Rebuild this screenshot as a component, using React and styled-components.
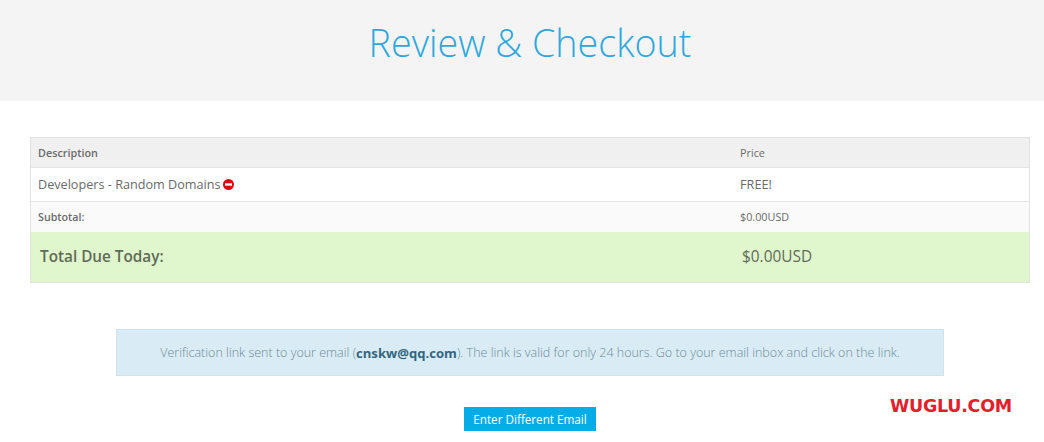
import React from "react";
import styled, { createGlobalStyle } from "styled-components";

const Global = createGlobalStyle`
  html, body { margin: 0; padding: 0; background: #fff; }
  body { font-family: "Open Sans", "Liberation Sans", sans-serif; color: #666; }
`;

const Page = styled.div`
  position: relative;
  width: 1044px;
  height: 442px;
  overflow: hidden;
  background: #fff;
`;

const Hero = styled.header`
  height: 101px;
  padding-left: 16px;
  box-sizing: border-box;
  background: #f4f4f4;
  display: flex;
  justify-content: center;
`;

const Title = styled.h1`
  margin: 18px 0 0;
  font-size: 37.7px;
  line-height: 50px;
  font-weight: 300;
  color: #2ea8dc;
`;

const Table = styled.div`
  margin: 36px 14px 0 30px;
  border: 1px solid #e2e2e2;
  display: flex;
  flex-direction: column;
`;

const Row = styled.div`
  display: grid;
  grid-template-columns: 702px 1fr;
  align-items: center;
  height: ${(p) => p.$h}px;
  padding-bottom: ${(p) => p.$lift || 0}px;
  background: ${(p) => p.$bg};
  border-bottom: ${(p) => (p.$line ? "1px solid #e4e4e4" : "none")};
  box-sizing: border-box;
`;

const Cell = styled.div`
  padding-left: ${(p) => p.$pad || 7}px;
  font-size: ${(p) => p.$size}px;
  font-weight: ${(p) => p.$weight || 400};
  color: ${(p) => p.$color || "#6a6a6a"};
  display: flex;
  align-items: center;
  gap: 2px;
`;

const Notice = styled.div`
  margin: 46px 100px 0 116px;
  height: 47px;
  box-sizing: border-box;
  background: #d9ecf5;
  border: 1px solid #cde4ef;
  display: flex;
  align-items: center;
  justify-content: center;
  font-size: 12.5px;
  font-weight: 300;
  color: #6d8a99;
  white-space: pre;
`;

const Email = styled.strong`
  font-weight: 700;
  color: #34667f;
  font-size: 13.1px;
`;

const Actions = styled.div`
  margin-top: 31px;
  padding-left: 16px;
  display: flex;
  justify-content: center;
`;

const Button = styled.button`
  width: 132px;
  height: 24px;
  border: none;
  padding: 0;
  background: #05ade8;
  color: #fff;
  font-family: inherit;
  font-size: 11.7px;
  font-weight: 400;
`;

const Watermark = styled.div`
  position: absolute;
  left: 890px;
  top: 396px;
  font-family: "DejaVu Sans", sans-serif;
  font-size: 17.5px;
  line-height: 20px;
  font-weight: 700;
  color: #e2202c;
  letter-spacing: -0.28px;
`;

const RemoveIcon = () => (
  <svg width="11" height="11" viewBox="0 0 11 11" aria-hidden="true">
    <circle cx="5.5" cy="5.5" r="5.5" fill="#e3000f" />
    <rect x="2" y="4.3" width="7" height="2.4" fill="#fff" />
  </svg>
);

export default function App() {
  return (
    <Page>
      <Global />
      <Hero>
        <Title>Review &amp; Checkout</Title>
      </Hero>
      <Table>
        <Row $h={30} $bg="#f0f0f0" $line>
          <Cell $size={10.8} $weight={600}>Description</Cell>
          <Cell $size={10.8}>Price</Cell>
        </Row>
        <Row $h={34} $lift={1} $bg="#fff" $line>
          <Cell $size={12.65}>Developers - Random Domains <RemoveIcon /></Cell>
          <Cell $size={12.7}>FREE!</Cell>
        </Row>
        <Row $h={30} $lift={1} $bg="#fafafa">
          <Cell $size={10.7} $weight={600}>Subtotal:</Cell>
          <Cell $size={10.8}>$0.00USD</Cell>
        </Row>
        <Row $h={50} $lift={2} $bg="#e0f6cc">
          <Cell $size={15.3} $weight={600} $pad={9} $color="#5f6b58">Total Due Today:</Cell>
          <Cell $size={15.4} $weight={500} $pad={9} $color="#5f6b58">$0.00USD</Cell>
        </Row>
      </Table>
      <Notice>
        Verification link sent to your email (<Email>cnskw@qq.com</Email>). The link is valid for only 24 hours. Go to your email inbox and click on the link.
      </Notice>
      <Actions>
        <Button>Enter Different Email</Button>
      </Actions>
      <Watermark>WUGLU.COM</Watermark>
    </Page>
  );
}
